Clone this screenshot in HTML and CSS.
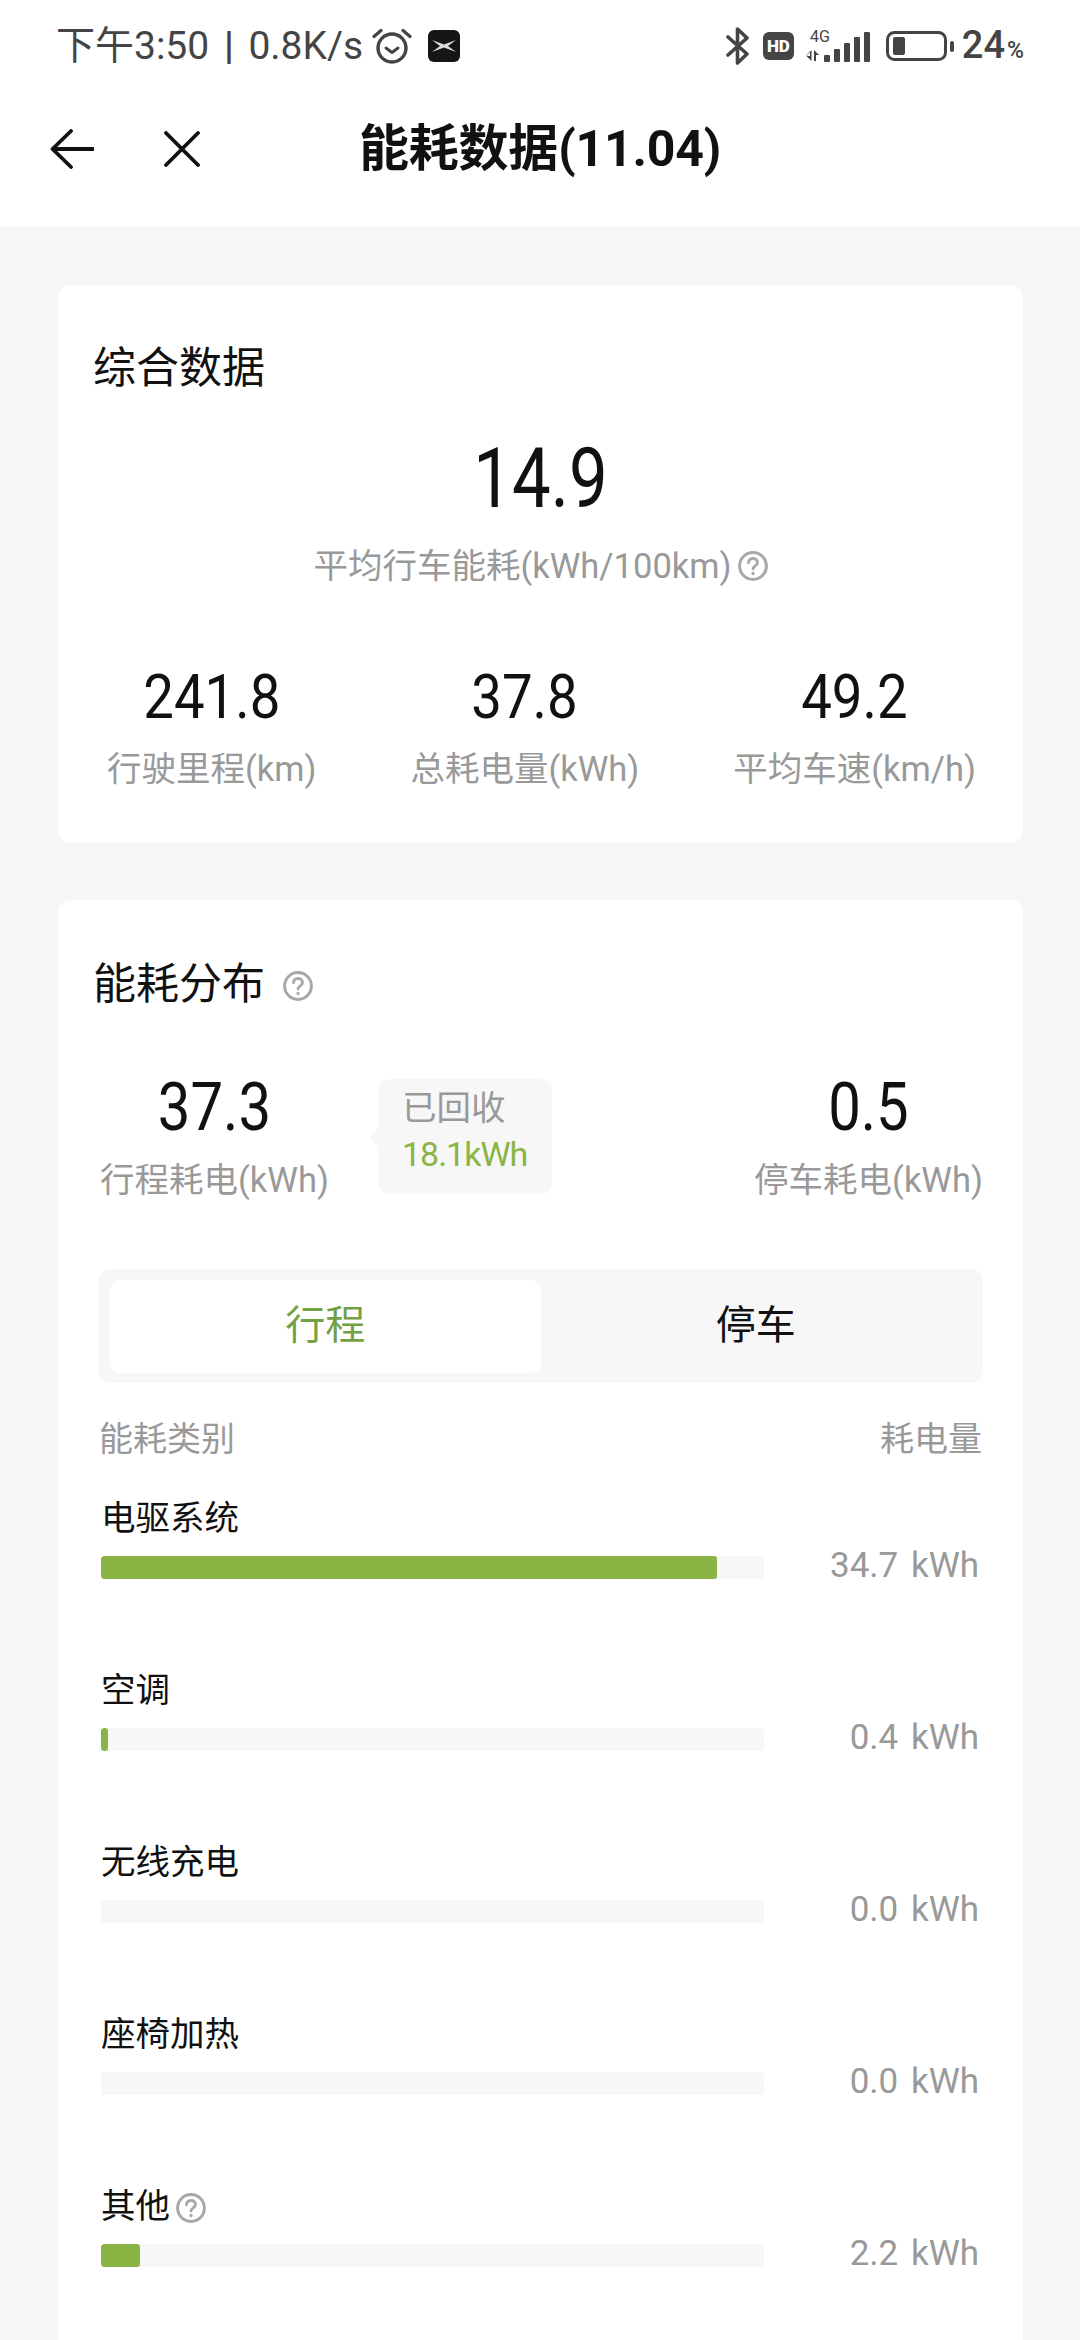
FILE: index.html
```html
<!DOCTYPE html>
<html lang="zh-CN">
<head>
    <meta charset="UTF-8">
    <meta name="viewport" content="width=device-width, initial-scale=1.0">
    <title>能耗数据</title>
    <link rel="stylesheet" href="styles.css">
</head>
<body>
    <!-- Status bar -->
    <div class="status">
        <div class="status-left">
            <span class="status-text">下午3:50 <b>|</b> 0.8K/s</span>
            <svg class="ic-alarm" viewBox="0 0 40 36"><g fill="none" stroke="#444" stroke-linecap="round"><circle cx="20" cy="20" r="14" stroke-width="3.4"/><path d="M14 20l6 4.500 6-4.500" stroke-width="3" stroke-linejoin="round"/><path d="M2 8.500 9 2.500M38 8.500 31 2.500" stroke-width="3.200"/></g></svg>
            <svg class="ic-app" viewBox="0 0 32 32"><rect width="32" height="32" rx="6" fill="#161616"/><path d="M4 10 16 14.500 28 10 20 16 28 22 16 17.500 4 22 12 16Z" fill="#ddd"/></svg>
        </div>
        <div class="status-right">
            <svg class="ic-bt" viewBox="0 0 24 38"><path d="M2 10 21 27 11.500 36V2L21 11 2 28" fill="none" stroke="#444" stroke-width="3.600" stroke-linejoin="round" stroke-linecap="round"/></svg>
            <span class="hd">HD</span>
            <svg class="ic-signal" viewBox="0 -6 66 38"><text x="5" y="12" class="sig-label">4G</text><path d="M1 26h4v-5zM6.500 20v11l-5-5M9 31V20l5 5h-3v6z" fill="#444"/><rect x="19" y="25" width="6" height="7" rx="1" fill="#444"/><rect x="29" y="19" width="6" height="13" rx="1" fill="#444"/><rect x="39" y="13" width="6" height="19" rx="1" fill="#444"/><rect x="49" y="7" width="6" height="25" rx="1" fill="#444"/><rect x="59" y="2" width="6" height="30" rx="1" fill="#444"/></svg>
            <svg class="ic-batt" viewBox="0 0 68 30"><rect x="1.500" y="1.500" width="58" height="27" rx="7" fill="none" stroke="#444" stroke-width="3"/><rect x="7" y="6" width="12" height="18" rx="2" fill="#444"/><rect x="64" y="10" width="4" height="11" rx="2" fill="#444"/></svg>
            <span class="batt-text">24<small>%</small></span>
        </div>
    </div>

    <!-- Title bar -->
    <div class="nav">
        <div class="nav-icons">
            <svg class="ic-back" viewBox="0 0 44 40"><path d="M43 20H3M21 2 2.500 20 21 38" fill="none" stroke="#111" stroke-width="3.800" stroke-linecap="round" stroke-linejoin="round"/></svg>
            <svg class="ic-close" viewBox="0 0 36 36"><path d="M2 2 34 34M34 2 2 34" fill="none" stroke="#111" stroke-width="3.800" stroke-linecap="round"/></svg>
        </div>
        <div class="nav-title">能耗数据(11.04)</div>
    </div>

    <!-- Overall data -->
    <div class="card card-summary">
        <div class="card-title">综合数据</div>
        <div class="big-num">14.9</div>
        <div class="big-label">平均行车能耗(kWh/100km)<svg class="ic-help" viewBox="0 0 30 30"><use href="#help"/></svg></div>
        <div class="stats">
            <div class="stat"><div class="num">241.8</div><div class="label">行驶里程(km)</div></div>
            <div class="stat"><div class="num">37.8</div><div class="label">总耗电量(kWh)</div></div>
            <div class="stat"><div class="num">49.2</div><div class="label">平均车速(km/h)</div></div>
        </div>
    </div>

    <!-- Distribution -->
    <div class="card card-dist">
        <div class="card-title">能耗分布<svg class="ic-help ic-help-title" viewBox="0 0 30 30"><use href="#help"/></svg></div>
        <div class="dist-top">
            <div class="stat"><div class="num num-dist">37.3</div><div class="label">行程耗电(kWh)</div></div>
            <div class="recovered">
                <div class="rec-title">已回收</div>
                <div class="rec-value">18.1kWh</div>
            </div>
            <div class="stat stat-right"><div class="num num-dist">0.5</div><div class="label">停车耗电(kWh)</div></div>
        </div>

        <div class="tabs">
            <div class="tab active">行程</div>
            <div class="tab">停车</div>
        </div>

        <div class="table-head"><span>能耗类别</span><span>耗电量</span></div>

        <div class="row">
            <div class="row-label">电驱系统</div>
            <div class="track"><div class="fill" style="width: 616px"></div></div>
            <div class="row-value">34.7 kWh</div>
        </div>
        <div class="row">
            <div class="row-label">空调</div>
            <div class="track"><div class="fill" style="width: 7px"></div></div>
            <div class="row-value">0.4 kWh</div>
        </div>
        <div class="row">
            <div class="row-label">无线充电</div>
            <div class="track"></div>
            <div class="row-value">0.0 kWh</div>
        </div>
        <div class="row">
            <div class="row-label">座椅加热</div>
            <div class="track"></div>
            <div class="row-value">0.0 kWh</div>
        </div>
        <div class="row">
            <div class="row-label">其他<svg class="ic-help ic-help-row" viewBox="0 0 30 30"><use href="#help"/></svg></div>
            <div class="track"><div class="fill" style="width: 39px"></div></div>
            <div class="row-value">2.2 kWh</div>
        </div>
    </div>

    <!-- Shared question mark icon -->
    <svg class="defs" aria-hidden="true"><defs><g id="help" fill="none" stroke="#a8a8a8" stroke-linecap="round" stroke-linejoin="round"><circle cx="15" cy="15" r="13.400" stroke-width="3"/><path d="M10.500 11.800c0-2.700 2-4.300 4.500-4.300s4.500 1.600 4.500 4c0 3.300-4.500 3.300-4.500 6.500" stroke-width="2.800"/><path d="M15 22.300v.3" stroke-width="3.200"/></g></defs></svg>
</body>
</html>
```

FILE: styles.css
```css
* {
    box-sizing: border-box;
}

html, body {
    margin: 0;
    padding: 0;
}

body {
    width: 1080px;
    height: 2340px;
    overflow: hidden;
    background: #f6f6f6;
    color: #111;
    font-family: Roboto, "Noto Sans CJK SC", sans-serif;
}

.defs {
    display: none;
}

/* status bar */
.status {
    height: 92px;
    background: white;
    padding: 0 56px 0 56px;
    display: flex;
    justify-content: space-between;
    align-items: center;
    color: #444;
}

.status-left, .status-right {
    display: flex;
    align-items: center;
}

.status-text {
    font-size: 39px;
    line-height: 44px;
    word-spacing: 5px;
}

.status-text b {
    font-weight: 700;
}

.ic-alarm {
    width: 40px;
    height: 36px;
    margin-left: 9px;
}

.ic-app {
    width: 32px;
    height: 32px;
    margin-left: 16px;
}

.ic-bt {
    width: 24px;
    height: 38px;
}

.hd {
    width: 31px;
    height: 28px;
    margin-left: 13px;
    background: #444;
    border-radius: 6px;
    color: white;
    font-size: 17px;
    font-weight: 900;
    line-height: 28px;
    text-align: center;
}

.ic-signal {
    width: 66px;
    height: 38px;
    margin: -6px 0 0 11px;
}

.sig-label {
    font-size: 16px;
    fill: #444;
}

.ic-batt {
    width: 68px;
    height: 30px;
    margin-left: 15px;
}

.batt-text {
    margin: 4px 0 0 8px;
    font-size: 38px;
    font-weight: 500;
    line-height: 44px;
}

.batt-text small {
    font-size: 23px;
    margin-left: 2px;
}

/* title bar */
.nav {
    height: 135px;
    background: white;
    display: grid;
    grid-template-columns: 1fr auto 1fr;
    align-items: center;
}

.nav-icons {
    display: flex;
    align-items: center;
    padding-left: 50px;
    margin-top: -22px;
}

.ic-back {
    width: 44px;
    height: 40px;
}

.ic-close {
    width: 36px;
    height: 36px;
    margin-left: 70px;
}

.nav-title {
    font-size: 50px;
    font-weight: 700;
    line-height: 60px;
    margin-top: -21px;
    letter-spacing: -0.2px;
    grid-column: 2;
}

/* cards */
.card {
    margin: 58px 57px 0 58px;
    background: white;
    border-radius: 12px;
}

.card-title {
    display: flex;
    align-items: center;
    padding-left: 35px;
    font-size: 43px;
    line-height: 50px;
}

.num {
    font-size: 62px;
    line-height: 70px;
    transform: scaleX(0.88);
}

.label {
    margin-top: 15px;
    color: #999;
    font-size: 34.500px;
    line-height: 44px;
}

.stat {
    text-align: center;
}

.card-summary {
    padding-top: 58px;
    padding-bottom: 52px;
}

.big-num {
    margin-top: 36px;
    font-size: 84px;
    line-height: 100px;
    text-align: center;
    transform: scaleX(0.82);
}

.big-label {
    margin-top: 15px;
    display: flex;
    justify-content: center;
    align-items: center;
    color: #999;
    font-size: 34.500px;
    line-height: 44px;
}

.ic-help {
    width: 30px;
    height: 30px;
    margin-left: 6px;
    flex: none;
}

.ic-help-title {
    margin-left: 18px;
    margin-top: 4px;
}

.ic-help-row {
    margin-left: 6px;
    margin-top: 4px;
}

.stats {
    margin-top: 74px;
    padding: 0 47px 0 49px;
    display: flex;
    justify-content: space-between;
}

.card-dist {
    margin-top: 57px;
    padding-top: 59px;
    padding-bottom: 120px;
}

.dist-top {
    margin-top: 64px;
    padding: 0 40px 0 42px;
    display: flex;
    align-items: flex-start;
}

.num-dist {
    font-size: 66px;
}

.dist-top .label {
    margin-top: 15px;
}

.recovered {
    position: relative;
    width: 174px;
    height: 115px;
    margin: 6px 0 0 49px;
    padding: 7px 0 0 24px;
    background: #f7f7f7;
    border-radius: 12px;
}

/* little arrow on the left of the bubble */
.recovered::before {
    content: "";
    position: absolute;
    left: -6px;
    top: 51px;
    width: 14px;
    height: 14px;
    background: #f7f7f7;
    transform: rotate(45deg);
    border-radius: 2px;
}

.rec-title {
    color: #999;
    font-size: 34.500px;
    line-height: 44px;
}

.rec-value {
    color: #8ab545;
    font-size: 34px;
    line-height: 44px;
    letter-spacing: -1px;
    margin-top: 2px;
}

.stat-right {
    margin-left: auto;
}

/* tabs */
.tabs {
    margin: 67px 40px 0 40px;
    height: 114px;
    padding: 11px 12px 10px;
    display: flex;
    background: #f7f7f7;
    border-radius: 12px;
}

.tab {
    flex: 1;
    display: flex;
    align-items: center;
    justify-content: center;
    padding-bottom: 10px;
    font-size: 40px;
    border-radius: 10px;
}

.tab.active {
    background: white;
    color: #72a143;
}

.table-head {
    margin-top: 34px;
    padding: 0 41px 0 41px;
    display: flex;
    justify-content: space-between;
    color: #999;
    font-size: 34px;
    line-height: 44px;
}

/* energy rows */
.row {
    margin-top: 88px;
    padding: 0 44px 0 43px;
    display: grid;
    grid-template-columns: 663px 1fr;
    grid-template-rows: 44px 23px;
    row-gap: 17px;
}

.table-head + .row {
    margin-top: 34px;
}

.row-label {
    grid-column: 1 / 3;
    display: flex;
    align-items: center;
    padding-top: 2px;
    font-size: 34.500px;
    line-height: 44px;
}

.track {
    height: 23px;
    background: #f7f7f7;
    border-radius: 3px;
    overflow: hidden;
}

.fill {
    height: 100%;
    background: #8ab545;
    border-radius: 3px;
}

.row-value {
    color: #999;
    font-size: 35px;
    line-height: 19px;
    text-align: right;
    white-space: nowrap;
    word-spacing: 4px;
}
```
